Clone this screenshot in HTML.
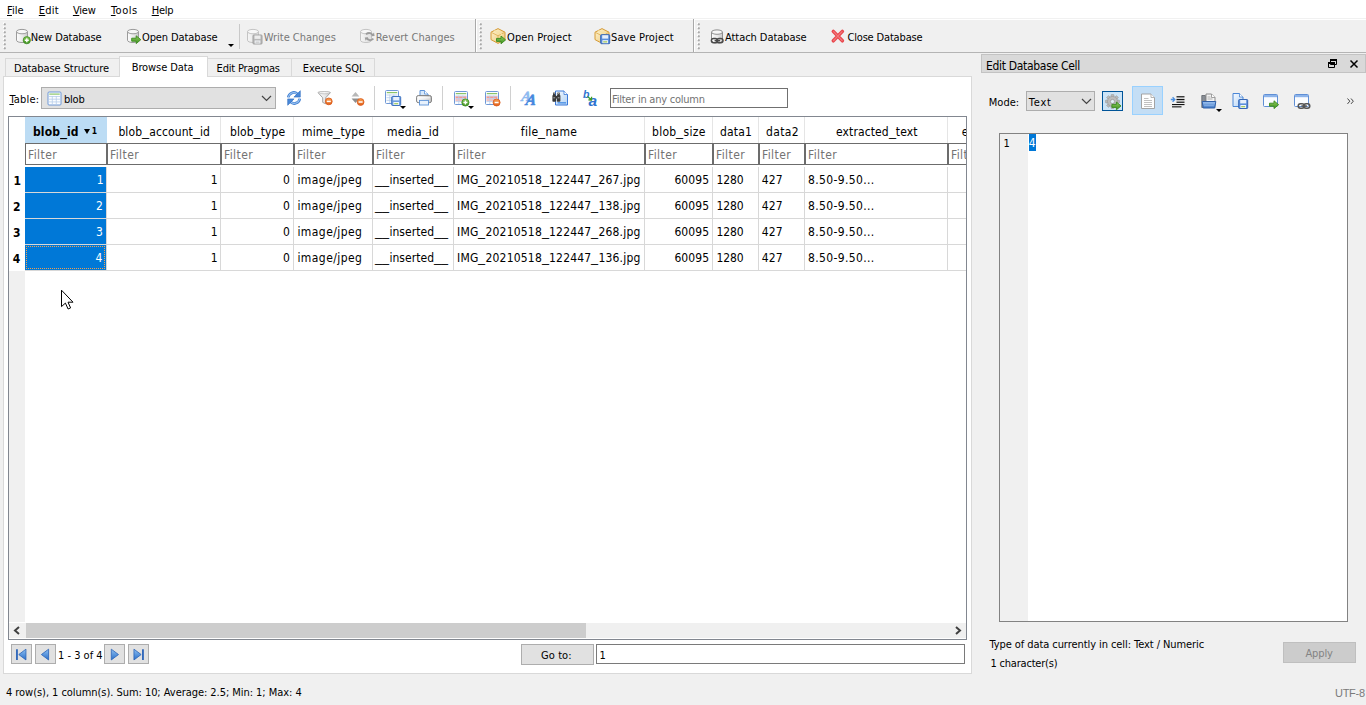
<!DOCTYPE html>
<html><head><meta charset="utf-8"><title>DB Browser for SQLite</title>
<style>
*{box-sizing:border-box;margin:0;padding:0}
html,body{width:1366px;height:705px;overflow:hidden;background:#f0f0f0}
body{position:relative;font-family:"DejaVu Sans Condensed","DejaVu Sans","Liberation Sans",sans-serif;font-stretch:condensed;font-size:11px;color:#000;line-height:13px}
.a{position:absolute;white-space:nowrap}
svg.a{overflow:visible}
.t{position:absolute;white-space:nowrap;height:13px;line-height:13px;margin-top:1px}
.g{color:#787878}
.b{font-weight:bold}
.h,.d,.f{font-size:12px;height:15px;line-height:15px}
.f{color:#737373}
.w{color:#fff}
u{text-decoration:underline;text-underline-offset:1px}
.sep{position:absolute;width:1px;background:#c9c9c9;top:24px;height:25px}
.hdl{position:absolute;top:22px;width:3px;height:28px;background:radial-gradient(circle at 1.8px 2.3px,#9c9c9c 0,#b9b9b9 .8px,rgba(200,200,200,0) 1.5px) 0 0/3px 4px repeat-y,radial-gradient(circle at .9px 1.3px,#fff 0,#fff .7px,rgba(255,255,255,0) 1.2px) 0 0/3px 4px repeat-y}
.arr{position:absolute;width:0;height:0;border-left:3px solid transparent;border-right:3px solid transparent;border-top:3px solid #000}
.sa{position:absolute;width:0;height:0;border-left:3px solid transparent;border-right:3px solid transparent;border-top:5px solid #000}
.tab{position:absolute;top:58px;height:18px;border:1px solid #d9d9d9;border-bottom:none;background:#f0f0f0}
.tab.sel{top:56px;height:21px;background:#fff;z-index:2}
.fl{position:absolute;top:143px;height:22px;border:1px solid #6c6c6c;background:#fff}
.nb{position:absolute;top:644px;height:20px;width:21px;border:1px solid #adadad;background:#e1e1e1}
.nb svg{position:absolute;left:1px;top:1px}
.us{display:inline-block;width:7px;transform:scaleX(1.3);transform-origin:0 50%;letter-spacing:0}
</style></head><body>
<svg width="0" height="0" style="position:absolute"><defs><linearGradient id="gcyl" x1="0" x2="1" y1="0" y2="0"><stop offset="0" stop-color="#fdfdfd"/><stop offset=".55" stop-color="#e9e9e9"/><stop offset="1" stop-color="#c9c9c9"/></linearGradient><linearGradient id="gcyd" x1="0" x2="1" y1="0" y2="0"><stop offset="0" stop-color="#f6f6f6"/><stop offset="1" stop-color="#dedede"/></linearGradient><linearGradient id="ggrn" x1="0" x2="0" y1="0" y2="1"><stop offset="0" stop-color="#8fce5d"/><stop offset="1" stop-color="#3d8f1f"/></linearGradient><linearGradient id="gorg" x1="0" x2="0" y1="0" y2="1"><stop offset="0" stop-color="#f7a052"/><stop offset="1" stop-color="#e2601a"/></linearGradient><linearGradient id="gblu" x1="0" x2="0" y1="0" y2="1"><stop offset="0" stop-color="#9fc4f0"/><stop offset="1" stop-color="#3f78c4"/></linearGradient><linearGradient id="gpkg" x1="0" x2="1" y1="0" y2="1"><stop offset="0" stop-color="#fdf3cf"/><stop offset="1" stop-color="#efc777"/></linearGradient><linearGradient id="gdoc" x1="0" x2="1" y1="0" y2="1"><stop offset="0" stop-color="#f6faff"/><stop offset="1" stop-color="#b3d3f5"/></linearGradient><linearGradient id="gnav" x1="0" x2="0" y1="0" y2="1"><stop offset="0" stop-color="#8ec0f2"/><stop offset="1" stop-color="#2a6fc9"/></linearGradient></defs></svg>
<div class="a" style="left:0;top:0;width:1366px;height:20px;background:#fff"></div><div class="a" style="left:0;top:18px;width:1366px;height:1px;background:#f1f1f1"></div>
<div class="t" id="t1" style="left:7.0px;top:3px;letter-spacing:0.03px;"><u>F</u>ile</div>
<div class="t" id="t2" style="left:38.8px;top:3px;letter-spacing:0.20px;"><u>E</u>dit</div>
<div class="t" id="t3" style="left:72.9px;top:3px;letter-spacing:-0.16px;"><u>V</u>iew</div>
<div class="t" id="t4" style="left:110.9px;top:3px;letter-spacing:0.50px;"><u>T</u>ools</div>
<div class="t" id="t5" style="left:151.7px;top:3px;letter-spacing:-0.23px;"><u>H</u>elp</div>
<div class="a" style="left:0;top:52px;width:1366px;height:1px;background:#b4b4b4"></div>
<div class="hdl" style="left:3px"></div>
<div class="hdl" style="left:479px"></div>
<div class="hdl" style="left:697px"></div>
<div class="sep" style="left:239px"></div>
<div class="a" style="left:475px;top:19px;width:1px;height:33px;background:#a9a9a9"></div><div class="a" style="left:476px;top:20px;width:1px;height:32px;background:#fff"></div>
<div class="a" style="left:693px;top:19px;width:1px;height:33px;background:#a9a9a9"></div><div class="a" style="left:694px;top:20px;width:1px;height:32px;background:#fff"></div>
<svg class="a" style="left:15px;top:28px" width="17" height="17" viewBox="0 0 17 17"><g transform="translate(0 0)"><path d="M1.5 3.6v8.6c0 1.4 2.4 2.3 5.5 2.3s5.5-.9 5.5-2.3V3.6" fill="url(#gcyl)" stroke="#9b9b9b"/><ellipse cx="7" cy="3.6" rx="5.5" ry="2.2" fill="#f7f7f7" stroke="#9b9b9b"/></g><circle cx="11.8" cy="12.2" r="3.6" fill="url(#ggrn)" stroke="#3b8a22" stroke-width=".8"/><path d="M9.8 12.2h4M11.8 10.2v4" stroke="#fff" stroke-width="1.4"/></svg>
<div class="t" id="t6" style="left:30.8px;top:30px;letter-spacing:-0.10px;">New Database</div>
<svg class="a" style="left:126px;top:28px" width="17" height="17" viewBox="0 0 17 17"><g transform="translate(0 0)"><path d="M1.5 3.6v8.6c0 1.4 2.4 2.3 5.5 2.3s5.5-.9 5.5-2.3V3.6" fill="url(#gcyl)" stroke="#9b9b9b"/><ellipse cx="7" cy="3.6" rx="5.5" ry="2.2" fill="#f7f7f7" stroke="#9b9b9b"/></g><path transform="translate(5.2 7.2) scale(1)" d="M0.5 3h4.5V0.6L9.6 4.5 5 8.4V6H0.5z" fill="url(#ggrn)" stroke="#3a8a1e" stroke-width=".9" stroke-linejoin="round"/></svg>
<div class="t" id="t7" style="left:142.0px;top:30px;letter-spacing:-0.10px;">Open Database</div>
<svg class="a" style="left:246px;top:28px" width="18" height="18" viewBox="0 0 18 18"><g transform="translate(0 0)"><path d="M1.5 3.6v8.6c0 1.4 2.4 2.3 5.5 2.3s5.5-.9 5.5-2.3V3.6" fill="url(#gcyd)" stroke="#c4c4c4"/><ellipse cx="7" cy="3.6" rx="5.5" ry="2.2" fill="#f7f7f7" stroke="#c4c4c4"/></g><g transform="translate(6.5 6.5) scale(1)"><rect x=".5" y=".5" width="9" height="9" rx=".8" fill="#b9b9b9" stroke="#9f9f9f"/><rect x="2" y="1" width="6" height="3.4" fill="#ececec"/><rect x="2.2" y="6" width="5.6" height="3" fill="#f4f7fb"/><rect x="3" y="7" width="4" height="1.3" fill="#c8c8c8"/></g></svg>
<div class="t g" id="t8" style="left:263.7px;top:30px;letter-spacing:-0.01px;">Write Changes</div>
<svg class="a" style="left:359px;top:28px" width="18" height="18" viewBox="0 0 18 18"><g transform="translate(0 0)"><path d="M1.5 3.6v8.6c0 1.4 2.4 2.3 5.5 2.3s5.5-.9 5.5-2.3V3.6" fill="url(#gcyd)" stroke="#c4c4c4"/><ellipse cx="7" cy="3.6" rx="5.5" ry="2.2" fill="#f7f7f7" stroke="#c4c4c4"/></g><g fill="none" stroke="#9c9c9c" stroke-width="1.8"><path d="M7 6.2c2.5-2 5.5-1.4 6.6 1"/><path d="M14.4 10.6c-2.3 2.2-5.4 1.8-6.8-.6"/></g><path d="M12.2 8.2 15.6 8 15 4.6zM9.2 9.2 5.8 9.4 6.6 12.8z" fill="#9c9c9c"/></svg>
<div class="t g" id="t9" style="left:375.7px;top:30px;letter-spacing:0.04px;">Revert Changes</div>
<svg class="a" style="left:490px;top:28px" width="17" height="17" viewBox="0 0 17 17"><g transform="translate(0 0)"><path d="M8 .6 15 4.2v7.4L8 15.4 1 11.6V4.2z" fill="url(#gpkg)" stroke="#d59a35" stroke-linejoin="round"/><path d="M1.2 4.3 8 7.8l6.8-3.5M8 7.8v7.4" fill="none" stroke="#e0b25a" stroke-width=".9"/><path d="M4.4 2.5 11.4 6v2.4" fill="none" stroke="#f7e3a6" stroke-width="1.2"/></g><path transform="translate(6 7.4) scale(1)" d="M0.5 3h4.5V0.6L9.6 4.5 5 8.4V6H0.5z" fill="url(#ggrn)" stroke="#3a8a1e" stroke-width=".9" stroke-linejoin="round"/></svg>
<div class="t" id="t10" style="left:507.0px;top:30px;letter-spacing:0.11px;">Open Project</div>
<svg class="a" style="left:594px;top:28px" width="17" height="17" viewBox="0 0 17 17"><g transform="translate(0 0)"><path d="M8 .6 15 4.2v7.4L8 15.4 1 11.6V4.2z" fill="url(#gpkg)" stroke="#d59a35" stroke-linejoin="round"/><path d="M1.2 4.3 8 7.8l6.8-3.5M8 7.8v7.4" fill="none" stroke="#e0b25a" stroke-width=".9"/><path d="M4.4 2.5 11.4 6v2.4" fill="none" stroke="#f7e3a6" stroke-width="1.2"/></g><g transform="translate(6.2 6.2) scale(1)"><rect x=".5" y=".5" width="9" height="9" rx=".8" fill="#5b8fdc" stroke="#3566b4"/><rect x="2" y="1" width="6" height="3.4" fill="#e6effb"/><rect x="2.2" y="6" width="5.6" height="3" fill="#f4f7fb"/><rect x="3" y="7" width="4" height="1.3" fill="#a3cc63"/></g></svg>
<div class="t" id="t11" style="left:611.0px;top:30px;letter-spacing:0.12px;">Save Project</div>
<svg class="a" style="left:710px;top:28px" width="17" height="17" viewBox="0 0 17 17"><g transform="translate(0 0.5)"><path d="M1.5 3.6v8.6c0 1.4 2.4 2.3 5.5 2.3s5.5-.9 5.5-2.3V3.6" fill="url(#gcyl)" stroke="#8e8e8e"/><ellipse cx="7" cy="3.6" rx="5.5" ry="2.2" fill="#f7f7f7" stroke="#8e8e8e"/></g><g transform="translate(0.6 9.6)" fill="none" stroke="#4a4a4a" stroke-width="1.5"><rect x=".8" y=".8" width="6" height="4.4" rx="2.2"/><rect x="6.4" y=".8" width="6" height="4.4" rx="2.2"/><path d="M4 3h5.4" stroke-width="1.6"/></g></svg>
<div class="t" id="t12" style="left:725.0px;top:30px;letter-spacing:-0.06px;">Attach Database</div>
<svg class="a" style="left:830px;top:28px" width="16" height="16" viewBox="0 0 16 16"><path d="M3.300 3.400 12.400 12.800M12.400 3.400 3.300 12.800" stroke="#e8464c" stroke-width="3.500" stroke-linecap="round" fill="none"/><path d="M3.600 3.600 12.100 12.500M12.100 3.600 3.600 12.500" stroke="#f2777b" stroke-width="1.300" stroke-linecap="round" fill="none"/></svg>
<div class="t" id="t13" style="left:847.4px;top:30px;letter-spacing:-0.16px;">Close Database</div>
<div class="arr" style="left:228px;top:44px"></div>
<div class="a" style="left:3px;top:76px;width:969px;height:598px;background:#fff;border:1px solid #d9d9d9"></div>
<div class="tab" style="left:5px;width:115px"></div>
<div class="t" id="t14" style="left:13.9px;top:61px;letter-spacing:-0.07px;z-index:3;">Database Structure</div>
<div class="tab sel" style="left:119px;width:89px"></div>
<div class="t" id="t15" style="left:131.7px;top:60px;letter-spacing:-0.09px;z-index:3;">Browse Data</div>
<div class="tab" style="left:207px;width:85px"></div>
<div class="t" id="t16" style="left:216.6px;top:61px;letter-spacing:-0.18px;z-index:3;">Edit Pragmas</div>
<div class="tab" style="left:291px;width:84px"></div>
<div class="t" id="t17" style="left:302.8px;top:61px;letter-spacing:-0.06px;z-index:3;">Execute SQL</div>
<div class="t" id="t18" style="left:9.4px;top:92px;letter-spacing:0.19px;"><u>T</u>able:</div>
<div class="a" style="left:41px;top:87px;width:235px;height:22px;background:#e1e1e1;border:1px solid #adadad"></div>
<svg class="a" style="left:47px;top:91px" width="16" height="16" viewBox="0 0 16 16"><g transform="translate(0.5 0.5)"><rect x=".5" y=".5" width="13" height="13" rx="1" fill="#fbfdff" stroke="#6f98d6"/><rect x="1.8" y="2" width="10.4" height="1.2" fill="#8cc56a"/><path d="M1.5 5h11M1.5 7.7h11M1.5 10.400h11M4.800 4.500v8.500M8.800 4.500v8.500" stroke="#b8cdea" stroke-width=".8" fill="none"/></g></svg>
<div class="t" id="t19" style="left:63.9px;top:92px;letter-spacing:-0.16px;">blob</div>
<svg class="a" style="left:261px;top:95px" width="11" height="7" viewBox="0 0 11 7"><path d="M1 1 L5.5 5.5 L10 1" fill="none" stroke="#444" stroke-width="1.2"/></svg>
<svg class="a" style="left:286px;top:90px" width="16" height="16" viewBox="0 0 16 16"><g fill="none" stroke="#3f7fd2" stroke-width="2.700"><path d="M2.300 7.400A5.500 5.500 0 0 1 11.400 3.900"/><path d="M13.700 8.600A5.500 5.500 0 0 1 4.600 12.100"/></g><g fill="none" stroke="#9cc3f0" stroke-width="1.100"><path d="M2.400 7.200A5.400 5.400 0 0 1 11 3.800"/><path d="M13.600 8.800A5.400 5.400 0 0 1 5 12.200"/></g><path d="M14.300 .7v6.400H7.900z" fill="#4a88d8" stroke="#2f6dc0" stroke-width=".6" stroke-linejoin="round"/><path d="M1.700 15.300V8.900H8.100z" fill="#4a88d8" stroke="#2f6dc0" stroke-width=".6" stroke-linejoin="round"/></svg>
<svg class="a" style="left:317px;top:90px" width="16" height="16" viewBox="0 0 16 16"><path d="M1 2.600C1 1.500 13.400 1.500 13.400 2.600L8.700 7.800v6l-3-1.400V7.800z" fill="url(#gcyl)" stroke="#a4a4a4" stroke-linejoin="round"/><ellipse cx="7.200" cy="2.700" rx="5.400" ry="1.100" fill="#fafafa" stroke="#b4b4b4" stroke-width=".7"/><circle cx="11.8" cy="11.4" r="3.4" fill="url(#gorg)" stroke="#d9581a" stroke-width=".8"/><path d="M9.8 11.4h4" stroke="#fff" stroke-width="1.5"/></svg>
<svg class="a" style="left:349px;top:90px" width="16" height="16" viewBox="0 0 16 16"><path d="M6.500 2 10.400 6.400h-7.800z" fill="#b8b8b8"/><path d="M6.500 13 10.400 8.400h-7.800z" fill="#8f8f8f"/><circle cx="11.6" cy="12" r="3.4" fill="url(#gorg)" stroke="#d9581a" stroke-width=".8"/><path d="M9.6 12h4" stroke="#fff" stroke-width="1.5"/></svg>
<svg class="a" style="left:385px;top:90px" width="17" height="17" viewBox="0 0 17 17"><g transform="translate(0 0)"><rect x=".5" y=".5" width="13" height="13" rx="1" fill="#fbfdff" stroke="#6f98d6"/><rect x="1.8" y="2" width="10.4" height="1.2" fill="#8cc56a"/><path d="M1.5 5h11M1.5 7.7h11M1.5 10.400h11M4.800 4.500v8.500M8.800 4.500v8.500" stroke="#b8cdea" stroke-width=".8" fill="none"/></g><g transform="translate(6.2 6) scale(1)"><rect x=".5" y=".5" width="9" height="9" rx=".8" fill="#6f9fe0" stroke="#3f73c0"/><rect x="2" y="1" width="6" height="3.4" fill="#e8f1fc"/><rect x="2.2" y="6" width="5.6" height="3" fill="#f4f7fb"/><rect x="3" y="7" width="4" height="1.3" fill="#a5cf6a"/></g></svg>
<svg class="a" style="left:416px;top:90px" width="16" height="16" viewBox="0 0 16 16"><g transform="translate(3.5 0)"><path d="M.5 .5h4.5l3.5 3.5v2.5h-8z" fill="#d6e8fb" stroke="#5b92d8"/><path d="M5 .5v3.5h3.5" fill="#fff" stroke="#5b92d8" stroke-width=".8"/></g><rect x=".6" y="5.600" width="14.800" height="7" rx="1.600" fill="url(#gcyl)" stroke="#7d7d7d"/><rect x="3.500" y="10.400" width="9" height="4.600" fill="#e7f1fc" stroke="#5b92d8" stroke-width=".9"/><path d="M2 7.800h12" stroke="#fff" stroke-width=".8"/></svg>
<svg class="a" style="left:453px;top:90px" width="17" height="17" viewBox="0 0 17 17"><g transform="translate(1 1)"><rect x=".5" y=".5" width="13" height="13" rx="1" fill="#fbfdff" stroke="#6f98d6"/><rect x="1.8" y="2" width="10.4" height="1.2" fill="#8cc56a"/><rect x="1.5" y="5.2" width="11" height="2.3" fill="#f59a93"/><rect x="1.5" y="8" width="11" height="2.2" fill="#f9c1bc"/><path d="M1.5 5h11M1.5 7.7h11M1.5 10.400h11M4.800 4.500v8.500M8.800 4.500v8.500" stroke="#b8cdea" stroke-width=".8" fill="none"/></g><circle cx="12.4" cy="12.5" r="3.6" fill="url(#ggrn)" stroke="#3b8a22" stroke-width=".8"/><path d="M10.4 12.5h4M12.4 10.5v4" stroke="#fff" stroke-width="1.4"/></svg>
<svg class="a" style="left:484px;top:90px" width="17" height="17" viewBox="0 0 17 17"><g transform="translate(1 1)"><rect x=".5" y=".5" width="13" height="13" rx="1" fill="#fbfdff" stroke="#6f98d6"/><rect x="1.8" y="2" width="10.4" height="1.2" fill="#8cc56a"/><rect x="1.5" y="5.2" width="11" height="2.3" fill="#f59a93"/><rect x="1.5" y="8" width="11" height="2.2" fill="#f9c1bc"/><path d="M1.5 5h11M1.5 7.7h11M1.5 10.400h11M4.800 4.500v8.500M8.800 4.500v8.500" stroke="#b8cdea" stroke-width=".8" fill="none"/></g><circle cx="12.6" cy="12.5" r="3.5" fill="url(#gorg)" stroke="#d9581a" stroke-width=".8"/><path d="M10.6 12.5h4" stroke="#fff" stroke-width="1.5"/></svg>
<svg class="a" style="left:521px;top:90px" width="17" height="16" viewBox="0 0 17 16"><g font-family="Liberation Serif,serif" font-style="italic" font-weight="bold" stroke-width=".5"><text x="1.500" y="10.500" font-size="14" fill="#8dbaf0" stroke="#8dbaf0" transform="skewX(-8)">A</text><text x="6.500" y="15.500" font-size="15.500" fill="#4688de" stroke="#4688de" transform="skewX(-8)">A</text></g></svg>
<svg class="a" style="left:552px;top:90px" width="16" height="16" viewBox="0 0 16 16"><g transform="translate(3 0.5)"><path d="M.5 .5h8.5l3.5 3.5v10.5h-12z" fill="url(#gdoc)" stroke="#3b78d8"/><path d="M9 .5v3.5h3.5" fill="#fff" stroke="#3b78d8" stroke-width=".8"/></g><rect x="5.500" y="12" width="8.500" height="1.600" fill="#5b9be8"/><g fill="#3a3a3a"><rect x=".4" y="5" width="3.600" height="6.800" rx=".8"/><rect x="4.800" y="5" width="3.600" height="6.800" rx=".8"/><rect x="1" y="2.600" width="2.400" height="2.800"/><rect x="5.400" y="2.600" width="2.400" height="2.800"/><rect x="3.600" y="6" width="1.600" height="2.600"/></g><path d="M1.300 7.800h1.800M5.700 7.800h1.800M1.600 3.600h1.200M6 3.600h1.200" stroke="#aaa" stroke-width="1"/></svg>
<svg class="a" style="left:583px;top:90px" width="16" height="16" viewBox="0 0 16 16"><g font-family="Liberation Sans,sans-serif" font-style="italic" font-weight="bold" fill="#2f73d0"><text x="0" y="8" font-size="10.500">b</text><text x="5.500" y="15.500" font-size="15.500">a</text></g><path d="M4.500 6.500 8 9.500M8.600 6.800 8.400 10 5.400 9.800" stroke="#3f9a2a" stroke-width="1.300" fill="none"/></svg>
<div class="arr" style="left:400px;top:106px"></div>
<div class="arr" style="left:468px;top:106px"></div>
<div class="a" style="left:374px;top:86px;width:1px;height:24px;background:#d0d0d0"></div>
<div class="a" style="left:442px;top:86px;width:1px;height:24px;background:#d0d0d0"></div>
<div class="a" style="left:510px;top:86px;width:1px;height:24px;background:#d0d0d0"></div>
<div class="a" style="left:610px;top:88px;width:178px;height:20px;background:#fff;border:1px solid #707070"></div>
<div class="t" id="t20" style="left:612.0px;top:92px;letter-spacing:-0.24px;color:#737373;">Filter in any column</div>
<div class="a" style="left:8px;top:116px;width:959px;height:524px;background:#fff;border:1px solid #828790"></div>
<div class="a" style="left:9px;top:271px;width:16px;height:351px;background:#f0f0f0"></div>
<div class="a" style="left:25px;top:117px;width:82px;height:26px;background:#bcdcf4"></div>
<div class="fl" style="left:25px;width:82px"></div><div class="t h b" id="t21" style="left:33.0px;top:124px;letter-spacing:0.10px;">blob<span class="us">_</span>id</div>
<div class="t f" id="t22" style="left:28.0px;top:147px;letter-spacing:0.39px;">Filter</div>
<div class="a" style="left:220px;top:117px;width:1px;height:26px;background:#e5e5e5"></div><div class="fl" style="left:107px;width:114px"></div><div class="t h" id="t23" style="left:118.4px;top:124px;letter-spacing:0.11px;">blob<span class="us">_</span>account<span class="us">_</span>id</div>
<div class="t f" id="t24" style="left:110.0px;top:147px;letter-spacing:0.39px;">Filter</div>
<div class="a" style="left:293px;top:117px;width:1px;height:26px;background:#e5e5e5"></div><div class="fl" style="left:221px;width:73px"></div><div class="t h" id="t25" style="left:230.0px;top:124px;letter-spacing:0.09px;">blob<span class="us">_</span>type</div>
<div class="t f" id="t26" style="left:224.0px;top:147px;letter-spacing:0.39px;">Filter</div>
<div class="a" style="left:372px;top:117px;width:1px;height:26px;background:#e5e5e5"></div><div class="fl" style="left:294px;width:79px"></div><div class="t h" id="t27" style="left:302.0px;top:124px;letter-spacing:0.17px;">mime<span class="us">_</span>type</div>
<div class="t f" id="t28" style="left:297.0px;top:147px;letter-spacing:0.39px;">Filter</div>
<div class="a" style="left:453px;top:117px;width:1px;height:26px;background:#e5e5e5"></div><div class="fl" style="left:373px;width:81px"></div><div class="t h" id="t29" style="left:387.0px;top:124px;letter-spacing:0.24px;">media<span class="us">_</span>id</div>
<div class="t f" id="t30" style="left:376.0px;top:147px;letter-spacing:0.39px;">Filter</div>
<div class="a" style="left:644px;top:117px;width:1px;height:26px;background:#e5e5e5"></div><div class="fl" style="left:454px;width:191px"></div><div class="t h" id="t31" style="left:520.8px;top:124px;letter-spacing:0.29px;">file<span class="us">_</span>name</div>
<div class="t f" id="t32" style="left:457.0px;top:147px;letter-spacing:0.39px;">Filter</div>
<div class="a" style="left:712px;top:117px;width:1px;height:26px;background:#e5e5e5"></div><div class="fl" style="left:645px;width:68px"></div><div class="t h" id="t33" style="left:652.0px;top:124px;letter-spacing:0.29px;">blob<span class="us">_</span>size</div>
<div class="t f" id="t34" style="left:648.0px;top:147px;letter-spacing:0.39px;">Filter</div>
<div class="a" style="left:758px;top:117px;width:1px;height:26px;background:#e5e5e5"></div><div class="fl" style="left:713px;width:46px"></div><div class="t h" id="t35" style="left:720.0px;top:124px;letter-spacing:0.20px;">data1</div>
<div class="t f" id="t36" style="left:716.0px;top:147px;letter-spacing:0.39px;">Filter</div>
<div class="a" style="left:804px;top:117px;width:1px;height:26px;background:#e5e5e5"></div><div class="fl" style="left:759px;width:46px"></div><div class="t h" id="t37" style="left:766.0px;top:124px;letter-spacing:0.35px;">data2</div>
<div class="t f" id="t38" style="left:762.0px;top:147px;letter-spacing:0.39px;">Filter</div>
<div class="a" style="left:947px;top:117px;width:1px;height:26px;background:#e5e5e5"></div><div class="fl" style="left:805px;width:143px"></div><div class="t h" id="t39" style="left:836.0px;top:124px;letter-spacing:0.12px;">extracted<span class="us">_</span>text</div>
<div class="t f" id="t40" style="left:808.0px;top:147px;letter-spacing:0.39px;">Filter</div>
<div class="fl" style="left:948px;width:18px;border-right:none"></div><div class="a" style="left:948px;top:117px;width:18px;height:48px;overflow:hidden"><div class="t h" id="t41" style="left:13.8px;top:7px;">e</div>
<div class="t f" id="t42" style="left:3.0px;top:30px;letter-spacing:0.39px;">Filt</div>
</div><div class="sa" style="left:83.5px;top:129px"></div>
<div class="t b" id="t43" style="left:91.8px;top:124px;font-size:8.5px;">1</div>
<div class="a" style="left:25px;top:192px;width:941px;height:1px;background:#d8d8d8"></div><div class="a" style="left:25px;top:167px;width:81px;height:25px;background:#0078d7"></div><div class="t d b" id="t44" style="left:13.4px;top:173px;">1</div>
<div class="t d w" id="t45" style="left:96.8px;top:172px;">1</div>
<div class="t d" id="t46" style="left:210.8px;top:172px;">1</div>
<div class="t d" id="t47" style="left:283.0px;top:172px;">0</div>
<div class="t d" id="t48" style="left:297.4px;top:172px;letter-spacing:0.44px;">image/jpeg</div>
<div class="t d" id="t49" style="left:375.4px;top:172px;letter-spacing:0.07px;"><span class="us">_</span><span class="us">_</span>inserted<span class="us">_</span><span class="us">_</span></div>
<div class="t d" id="t50" style="left:457.0px;top:172px;letter-spacing:0.20px;">IMG<span class="us">_</span>20210518<span class="us">_</span>122447<span class="us">_</span>267.jpg</div>
<div class="t d" id="t51" style="left:674.4px;top:172px;letter-spacing:0.11px;">60095</div>
<div class="t d" id="t52" style="left:716.4px;top:172px;letter-spacing:-0.09px;">1280</div>
<div class="t d" id="t53" style="left:761.8px;top:172px;letter-spacing:0.10px;">427</div>
<div class="t d" id="t54" style="left:808.0px;top:172px;letter-spacing:0.36px;">8.50-9.50...</div>

<div class="a" style="left:25px;top:218px;width:941px;height:1px;background:#d8d8d8"></div><div class="a" style="left:25px;top:193px;width:81px;height:25px;background:#0078d7"></div><div class="t d b" id="t55" style="left:13.0px;top:199px;">2</div>
<div class="t d w" id="t56" style="left:96.0px;top:198px;">2</div>
<div class="t d" id="t57" style="left:210.8px;top:198px;">1</div>
<div class="t d" id="t58" style="left:283.0px;top:198px;">0</div>
<div class="t d" id="t59" style="left:297.4px;top:198px;letter-spacing:0.44px;">image/jpeg</div>
<div class="t d" id="t60" style="left:375.4px;top:198px;letter-spacing:0.07px;"><span class="us">_</span><span class="us">_</span>inserted<span class="us">_</span><span class="us">_</span></div>
<div class="t d" id="t61" style="left:457.0px;top:198px;letter-spacing:0.20px;">IMG<span class="us">_</span>20210518<span class="us">_</span>122447<span class="us">_</span>138.jpg</div>
<div class="t d" id="t62" style="left:674.4px;top:198px;letter-spacing:0.11px;">60095</div>
<div class="t d" id="t63" style="left:716.4px;top:198px;letter-spacing:-0.09px;">1280</div>
<div class="t d" id="t64" style="left:761.8px;top:198px;letter-spacing:0.10px;">427</div>
<div class="t d" id="t65" style="left:808.0px;top:198px;letter-spacing:0.36px;">8.50-9.50...</div>

<div class="a" style="left:25px;top:244px;width:941px;height:1px;background:#d8d8d8"></div><div class="a" style="left:25px;top:219px;width:81px;height:25px;background:#0078d7"></div><div class="t d b" id="t66" style="left:13.0px;top:225px;">3</div>
<div class="t d w" id="t67" style="left:96.0px;top:224px;">3</div>
<div class="t d" id="t68" style="left:210.8px;top:224px;">1</div>
<div class="t d" id="t69" style="left:283.0px;top:224px;">0</div>
<div class="t d" id="t70" style="left:297.4px;top:224px;letter-spacing:0.44px;">image/jpeg</div>
<div class="t d" id="t71" style="left:375.4px;top:224px;letter-spacing:0.07px;"><span class="us">_</span><span class="us">_</span>inserted<span class="us">_</span><span class="us">_</span></div>
<div class="t d" id="t72" style="left:457.0px;top:224px;letter-spacing:0.20px;">IMG<span class="us">_</span>20210518<span class="us">_</span>122447<span class="us">_</span>268.jpg</div>
<div class="t d" id="t73" style="left:674.4px;top:224px;letter-spacing:0.11px;">60095</div>
<div class="t d" id="t74" style="left:716.4px;top:224px;letter-spacing:-0.09px;">1280</div>
<div class="t d" id="t75" style="left:761.8px;top:224px;letter-spacing:0.10px;">427</div>
<div class="t d" id="t76" style="left:808.0px;top:224px;letter-spacing:0.36px;">8.50-9.50...</div>

<div class="a" style="left:25px;top:270px;width:941px;height:1px;background:#d8d8d8"></div><div class="a" style="left:25px;top:245px;width:81px;height:25px;background:#0078d7"></div><div class="a" style="left:26px;top:246px;width:79px;height:23px;border:1px dotted #f0a050"></div><div class="t d b" id="t77" style="left:12.8px;top:251px;">4</div>
<div class="t d w" id="t78" style="left:95.6px;top:250px;">4</div>
<div class="t d" id="t79" style="left:210.8px;top:250px;">1</div>
<div class="t d" id="t80" style="left:283.0px;top:250px;">0</div>
<div class="t d" id="t81" style="left:297.4px;top:250px;letter-spacing:0.44px;">image/jpeg</div>
<div class="t d" id="t82" style="left:375.4px;top:250px;letter-spacing:0.07px;"><span class="us">_</span><span class="us">_</span>inserted<span class="us">_</span><span class="us">_</span></div>
<div class="t d" id="t83" style="left:457.0px;top:250px;letter-spacing:0.20px;">IMG<span class="us">_</span>20210518<span class="us">_</span>122447<span class="us">_</span>136.jpg</div>
<div class="t d" id="t84" style="left:674.4px;top:250px;letter-spacing:0.11px;">60095</div>
<div class="t d" id="t85" style="left:716.4px;top:250px;letter-spacing:-0.09px;">1280</div>
<div class="t d" id="t86" style="left:761.8px;top:250px;letter-spacing:0.10px;">427</div>
<div class="t d" id="t87" style="left:808.0px;top:250px;letter-spacing:0.36px;">8.50-9.50...</div>

<div class="a" style="left:106px;top:167px;width:1px;height:104px;background:#d8d8d8"></div><div class="a" style="left:220px;top:167px;width:1px;height:104px;background:#d8d8d8"></div><div class="a" style="left:293px;top:167px;width:1px;height:104px;background:#d8d8d8"></div><div class="a" style="left:372px;top:167px;width:1px;height:104px;background:#d8d8d8"></div><div class="a" style="left:453px;top:167px;width:1px;height:104px;background:#d8d8d8"></div><div class="a" style="left:644px;top:167px;width:1px;height:104px;background:#d8d8d8"></div><div class="a" style="left:712px;top:167px;width:1px;height:104px;background:#d8d8d8"></div><div class="a" style="left:758px;top:167px;width:1px;height:104px;background:#d8d8d8"></div><div class="a" style="left:804px;top:167px;width:1px;height:104px;background:#d8d8d8"></div><div class="a" style="left:947px;top:167px;width:1px;height:104px;background:#d8d8d8"></div>
<div class="a" style="left:9px;top:623px;width:957px;height:15px;background:#f0f0f0"></div>
<div class="a" style="left:26px;top:623px;width:560px;height:15px;background:#cdcdcd"></div>
<svg class="a" style="left:13px;top:626px" width="8" height="9" viewBox="0 0 8 9"><path d="M6 1 L2 4.500 L6 8" fill="none" stroke="#404040" stroke-width="2"/></svg>
<svg class="a" style="left:954px;top:626px" width="8" height="9" viewBox="0 0 8 9"><path d="M2 1 L6 4.500 L2 8" fill="none" stroke="#404040" stroke-width="2"/></svg>
<div class="nb" style="left:11px"><svg width="17" height="17" viewBox="0 0 17 17"><g transform="translate(.8 .9) scale(.9)"><path d="M3.500 2.500v12" stroke="#2a63b8" stroke-width="2"/><path d="M13.500 2.500v12L5.500 8.500z" fill="url(#gnav)" stroke="#2a63b8" stroke-width=".9" stroke-linejoin="round"/></g></svg></div>
<div class="nb" style="left:35px"><svg width="17" height="17" viewBox="0 0 17 17"><g transform="translate(.8 .9) scale(.9)"><path d="M12 2.500v12L4 8.500z" fill="url(#gnav)" stroke="#2a63b8" stroke-width=".9" stroke-linejoin="round"/></g></svg></div>
<div class="nb" style="left:104px"><svg width="17" height="17" viewBox="0 0 17 17"><g transform="translate(.8 .9) scale(.9)"><path d="M5 2.500v12L13 8.500z" fill="url(#gnav)" stroke="#2a63b8" stroke-width=".9" stroke-linejoin="round"/></g></svg></div>
<div class="nb" style="left:128px"><svg width="17" height="17" viewBox="0 0 17 17"><g transform="translate(.8 .9) scale(.9)"><path d="M13.500 2.500v12" stroke="#2a63b8" stroke-width="2"/><path d="M3.500 2.500v12L11.500 8.500z" fill="url(#gnav)" stroke="#2a63b8" stroke-width=".9" stroke-linejoin="round"/></g></svg></div>
<div class="t" id="t88" style="left:58.0px;top:648px;">1 - 3 of 4</div>
<div class="a" style="left:521px;top:644px;width:73px;height:21px;border:1px solid #adadad;background:#e1e1e1"></div>
<div class="t" id="t89" style="left:541.0px;top:648px;letter-spacing:0.09px;">Go to:</div>
<div class="a" style="left:596px;top:644px;width:369px;height:20px;border:1px solid #7a7a7a;background:#fff"></div>
<div class="t" id="t90" style="left:599.4px;top:648px;">1</div>
<svg class="a" style="left:60px;top:289px" width="15" height="22" viewBox="0 0 15 22"><path d="M1.500 1.200V17.600L5.400 14.100 8.100 20 10.600 18.900 8 13.200H13z" fill="#fff" stroke="#000" stroke-width="1" stroke-linejoin="miter"/></svg>
<div class="a" style="left:981px;top:54px;width:385px;height:19px;background:#d9d9d9;border:1px solid #c3c3c3"></div>
<div class="t h" id="t91" style="left:986.0px;top:58px;letter-spacing:-0.31px;">Edit Database Cell</div>
<svg class="a" style="left:1328px;top:59px" width="10" height="10" viewBox="0 0 10 10"><path d="M2.500 0.500h6v5h-6z M0.500 3.500h6v5h-6z" fill="#d9d9d9" stroke="#000" stroke-width="1"/><path d="M2 1h7M0 4h7" stroke="#000" stroke-width="2" fill="none"/></svg>
<svg class="a" style="left:1349px;top:59px" width="10" height="10" viewBox="0 0 10 10"><path d="M1.500 1.500L8.500 8.500M8.500 1.500L1.500 8.500" stroke="#000" stroke-width="1.500" fill="none"/></svg>
<div class="t" id="t92" style="left:988.8px;top:95px;letter-spacing:0.02px;">Mode:</div>
<div class="a" style="left:1026px;top:91px;width:69px;height:20px;background:#e1e1e1;border:1px solid #adadad"></div>
<div class="t" id="t93" style="left:1028.8px;top:95px;letter-spacing:0.80px;">Text</div>
<svg class="a" style="left:1081px;top:98px" width="11" height="7" viewBox="0 0 11 7"><path d="M1 1 L5.500 5.500 L10 1" fill="none" stroke="#444" stroke-width="1.200"/></svg>
<div class="a" style="left:1102px;top:91px;width:21px;height:20px;background:#cce4f7;border:1px solid #005499"></div>
<svg class="a" style="left:1105px;top:94px" width="17" height="17" viewBox="0 0 17 17"><g transform="translate(7.500 7.500)"><g fill="#b9b9b9" stroke="#979797" stroke-width=".5"><rect x="-1.500" y="-7" width="3" height="4" rx=".6" transform="rotate(0)"/><rect x="-1.500" y="-7" width="3" height="4" rx=".6" transform="rotate(45)"/><rect x="-1.500" y="-7" width="3" height="4" rx=".6" transform="rotate(90)"/><rect x="-1.500" y="-7" width="3" height="4" rx=".6" transform="rotate(135)"/><rect x="-1.500" y="-7" width="3" height="4" rx=".6" transform="rotate(180)"/><rect x="-1.500" y="-7" width="3" height="4" rx=".6" transform="rotate(225)"/><rect x="-1.500" y="-7" width="3" height="4" rx=".6" transform="rotate(270)"/><rect x="-1.500" y="-7" width="3" height="4" rx=".6" transform="rotate(315)"/></g><circle r="5" fill="#bdbdbd" stroke="#979797" stroke-width=".6"/><circle r="2.100" fill="#e4eef8" stroke="#8b8b8b" stroke-width=".6"/></g><path transform="translate(6.4 7.4) scale(1)" d="M0.5 3h4.5V0.6L9.6 4.5 5 8.4V6H0.5z" fill="url(#ggrn)" stroke="#3a8a1e" stroke-width=".9" stroke-linejoin="round"/></svg>
<div class="a" style="left:1132px;top:86px;width:31px;height:29px;background:#c4def5;border:1px solid #99d1ff"></div>
<svg class="a" style="left:1139px;top:93px" width="16" height="17" viewBox="0 0 16 17"><g transform="translate(2 0.5)"><path d="M.5 .5h9.5l3.5 3.5v11h-13z" fill="#fefefe" stroke="#a3a3a3"/><path d="M10 .5v3.5h3.5" fill="#fff" stroke="#a3a3a3" stroke-width=".8"/><path d="M3 5h4.500M3 7h8M3 9h8M3 11h8M3 13h8" stroke="#b9b9b9" stroke-width=".9" fill="none"/></g></svg>
<svg class="a" style="left:1170px;top:93px" width="16" height="16" viewBox="0 0 16 16"><g fill="#111"><rect x="6.500" y="3.200" width="8" height="1.200"/><rect x="6.500" y="5.900" width="8" height="1.300"/><rect x="6.500" y="8.600" width="8" height="1.200"/><rect x="2" y="11" width="12.500" height="1.100"/><rect x="2" y="13.300" width="9.500" height="1.100"/></g><path d="M0.800 6.500h3.400M2.600 4.300 4.800 6.500 2.600 8.700" stroke="#4a8fe0" stroke-width="1.300" fill="none"/></svg>
<svg class="a" style="left:1201px;top:93px" width="17" height="16" viewBox="0 0 17 16"><path d="M.8 2.500h3.600v12H.8z" fill="#8a8f96" stroke="#5c6168" stroke-width=".8"/><g transform="translate(4.5 0.5)"><path d="M.5 .5h5.5l3.5 3.5v4.5h-9z" fill="#f3f3f3" stroke="#8a8a8a"/><path d="M6 .5v3.5h3.5" fill="#fff" stroke="#8a8a8a" stroke-width=".8"/><path d="M2 3.500h3M2 5.500h5" stroke="#aaa" stroke-width=".9" fill="none"/></g><path d="M1.200 8.500h13.600l-1 6.500H2.200z" fill="url(#gblu)" stroke="#2f5fa8" stroke-linejoin="round"/><path d="M3 10.500h10M3.200 12.500h9.600" stroke="#86aee6" stroke-width=".8"/></svg>
<svg class="a" style="left:1232px;top:93px" width="17" height="17" viewBox="0 0 17 17"><g transform="translate(0.5 0)"><path d="M.5 .5h6.5l3.5 3.5v9.5h-10z" fill="url(#gdoc)" stroke="#4a86d6"/><path d="M7 .5v3.5h3.5" fill="#fff" stroke="#4a86d6" stroke-width=".8"/></g><g transform="translate(6.2 6) scale(1)"><rect x=".5" y=".5" width="9" height="9" rx=".8" fill="#5b8fdc" stroke="#3566b4"/><rect x="2" y="1" width="6" height="3.4" fill="#e6effb"/><rect x="2.2" y="6" width="5.6" height="3" fill="#f4f7fb"/><rect x="3" y="7" width="4" height="1.3" fill="#a3cc63"/></g></svg>
<svg class="a" style="left:1263px;top:93px" width="17" height="17" viewBox="0 0 17 17"><g transform="translate(0 1)"><rect x=".5" y=".5" width="14" height="12" rx="1" fill="#fafcff" stroke="#5f8fd6"/><rect x="1" y="1" width="13" height="2.2" fill="#8db4ea"/></g><path transform="translate(6 7.2) scale(1)" d="M0.5 3h4.5V0.6L9.6 4.5 5 8.4V6H0.5z" fill="url(#ggrn)" stroke="#3a8a1e" stroke-width=".9" stroke-linejoin="round"/></svg>
<svg class="a" style="left:1294px;top:93px" width="17" height="17" viewBox="0 0 17 17"><g transform="translate(0 1)"><rect x=".5" y=".5" width="14" height="12" rx="1" fill="#fafcff" stroke="#5f8fd6"/><rect x="1" y="1" width="13" height="2.2" fill="#8db4ea"/></g><g transform="translate(3.4 10)" fill="none" stroke="#555" stroke-width="1.5"><rect x=".8" y=".8" width="6" height="4.4" rx="2.2"/><rect x="6.4" y=".8" width="6" height="4.4" rx="2.2"/><path d="M4 3h5.4" stroke-width="1.6"/></g></svg>
<div class="arr" style="left:1216px;top:109px"></div>
<svg class="a" style="left:1346px;top:97px" width="9" height="8" viewBox="0 0 9 8"><path d="M1.500 1.500 3.800 4.200 1.500 6.900M5 1.500 7.300 4.200 5 6.900" fill="none" stroke="#444" stroke-width="1"/></svg>
<div class="a" style="left:999px;top:133px;width:349px;height:489px;background:#fff;border:1px solid #828282"></div>
<div class="a" style="left:1000px;top:134px;width:28px;height:487px;background:#f0f0f0"></div>
<div class="t" id="t94" style="left:1003.4px;top:136px;">1</div>
<div class="a" style="left:1029px;top:134px;width:7px;height:17px;background:#0078d7"></div>
<div class="t d w" id="t95" style="left:1028.8px;top:135px;">4</div>
<div class="t" id="t96" style="left:989.4px;top:637px;letter-spacing:-0.07px;">Type of data currently in cell: Text / Numeric</div>
<div class="t" id="t97" style="left:990.4px;top:656px;letter-spacing:-0.19px;">1 character(s)</div>
<div class="a" style="left:1283px;top:642px;width:73px;height:21px;background:#cccccc;border:1px solid #bfbfbf"></div>
<div class="t" id="t98" style="left:1305.4px;top:646px;letter-spacing:-0.09px;color:#838383;">Apply</div>
<div class="t" id="t99" style="left:6.0px;top:685px;letter-spacing:-0.05px;">4 row(s), 1 column(s). Sum: 10; Average: 2.5; Min: 1; Max: 4</div>
<div class="t" id="t100" style="left:1335.0px;top:686px;letter-spacing:-0.29px;color:#7a7a7a;font-family:'Liberation Sans',sans-serif;font-stretch:normal;">UTF-8</div>
</body></html>
